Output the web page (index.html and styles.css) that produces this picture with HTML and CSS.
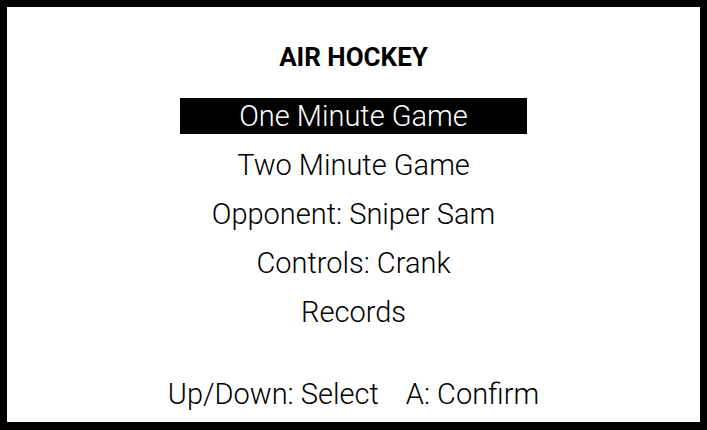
FILE: index.html
```html
<!DOCTYPE html>
<html lang="en">

<head>
    <meta charset="UTF-8">
    <meta name="viewport" content="width=device-width, initial-scale=1.0">
    <title>Air Hockey</title>
    <link rel="stylesheet" href="styles.css">
</head>

<body>

    <div class="screen">
        <h1 class="title">AIR HOCKEY</h1>
        <ul class="menu">
            <li class="menu-item selected">One Minute Game</li>
            <li class="menu-item">Two Minute Game</li>
            <li class="menu-item">Opponent: Sniper Sam</li>
            <li class="menu-item">Controls: Crank</li>
            <li class="menu-item">Records</li>
        </ul>
        <p class="hint">Up/Down: Select <span class="hint-gap">A: Confirm</span></p>
    </div>

</body>

</html>
```

FILE: styles.css
```css
* {
    padding: 0;
    margin: 0;
    box-sizing: border-box;
}

body {
    background-color: #000;
    font-family: 'Roboto', 'Liberation Sans', sans-serif;
    color: #000;
    height: 430px;
    padding: 7px 7px 8px 7px;
}

.screen {
    background-color: #fff;
    height: 415px;
    display: flex;
    flex-direction: column;
    align-items: center;
    padding-top: 34px;
    padding-bottom: 12px;
}

.title {
    font-size: 26px;
    font-weight: 700;
    line-height: 32px;
    height: 32px;
}

.menu {
    list-style: none;
    margin-top: 25px;
    display: flex;
    flex-direction: column;
    align-items: center;
    gap: 13px;
}

.menu-item {
    font-size: 29px;
    font-weight: 300;
    line-height: 37px;
    height: 36px;
    text-align: center;
}

.selected {
    background-color: #000;
    color: #fff;
    width: 347px;
}

.hint {
    margin-top: auto;
    font-size: 29px;
    font-weight: 300;
    line-height: 32px;
}

.hint-gap {
    margin-left: 20px;
}
```
